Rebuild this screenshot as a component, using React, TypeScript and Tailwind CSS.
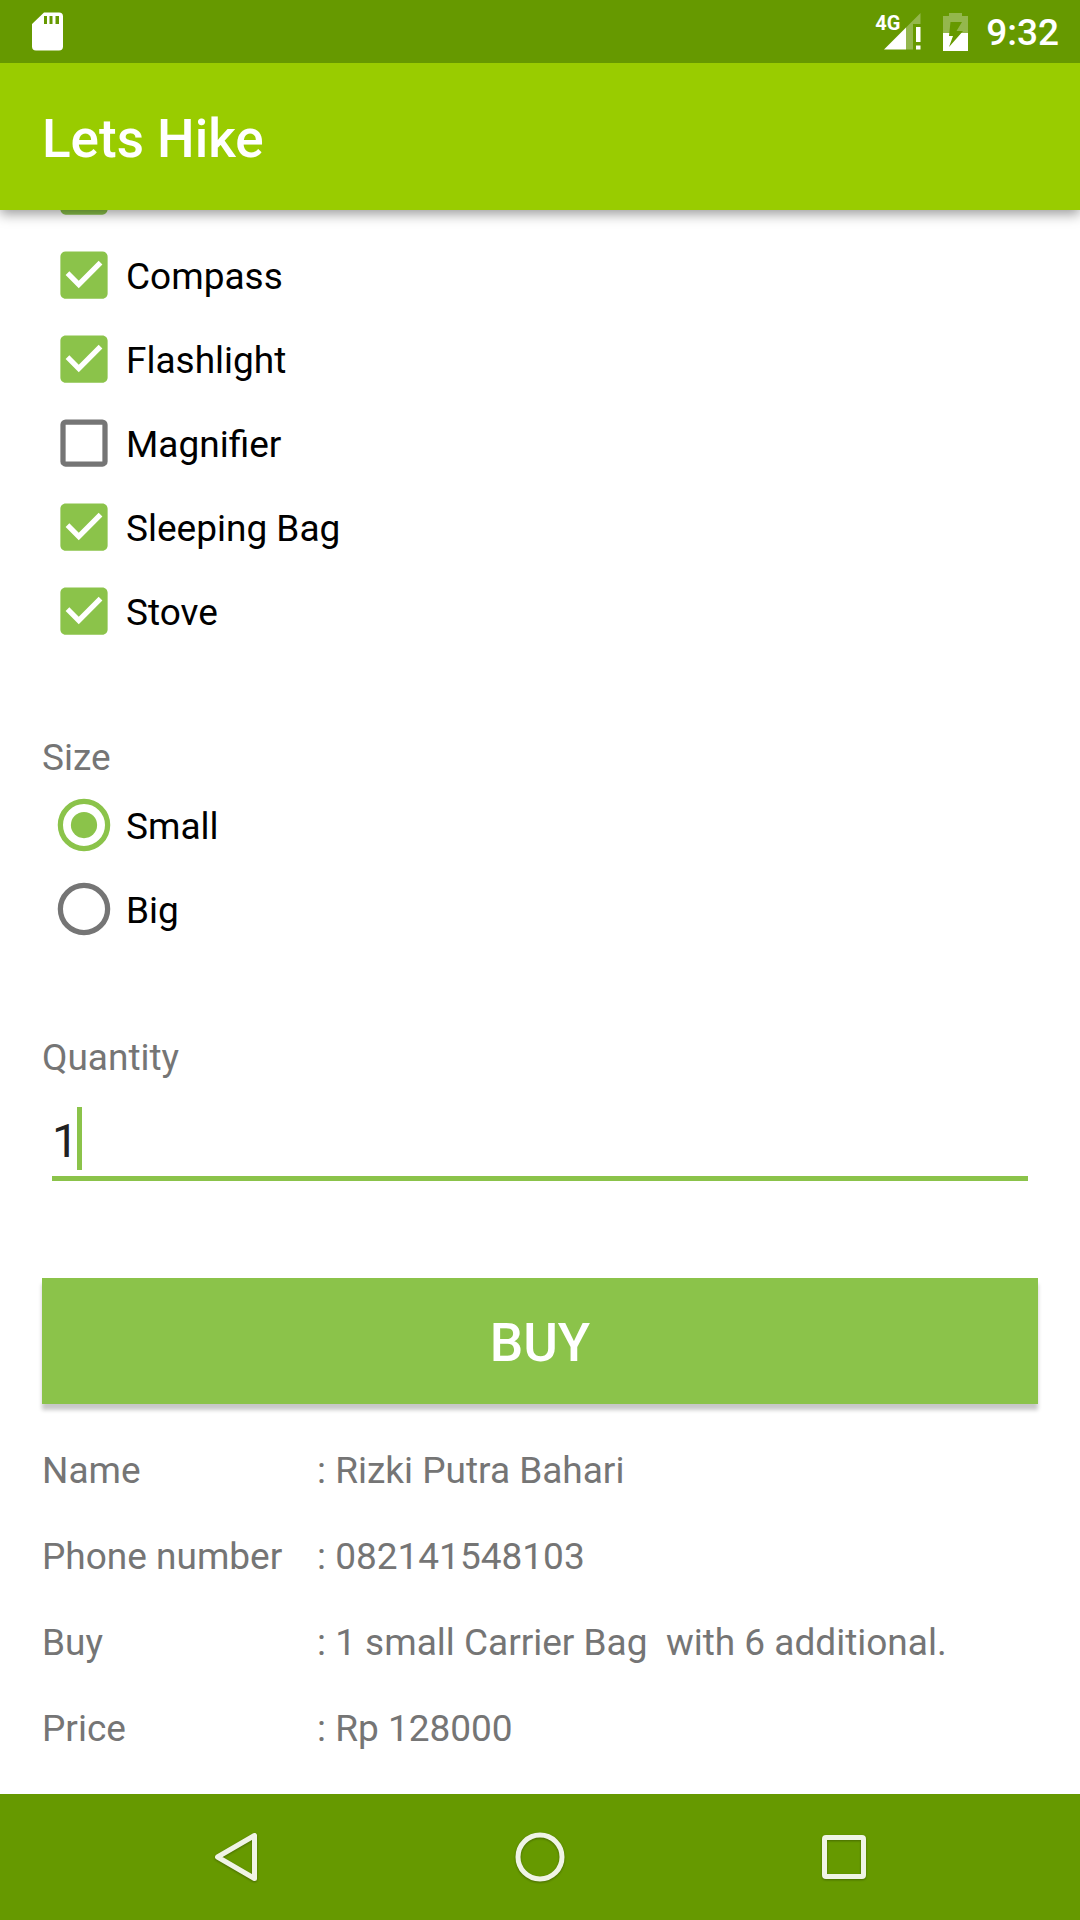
import { useState } from "react";
import type { ReactNode } from "react";

type Item = { name: string; checked: boolean; hidden?: boolean };

const ITEMS: Item[] = [
  { name: "Additional item", checked: true, hidden: true },
  { name: "Compass", checked: true },
  { name: "Flashlight", checked: true },
  { name: "Magnifier", checked: false },
  { name: "Sleeping Bag", checked: true },
  { name: "Stove", checked: true },
];

const SIZES = ["Small", "Big"];

const SUMMARY = [
  ["Name", ": Rizki Putra Bahari"],
  ["Phone number", ": 082141548103"],
  ["Buy", ": 1 small Carrier Bag  with 6 additional."],
  ["Price", ": Rp 128000"],
];

function SdCardIcon() {
  return (
    <svg width="31" height="39" viewBox="0 0 31 39" aria-hidden="true">
      <path
        fill="#fff"
        fillRule="evenodd"
        d="M12 0.5H27a4 4 0 0 1 4 4V34.500a4 4 0 0 1-4 4H4a4 4 0 0 1-4-4V12ZM12 4v8h3V4ZM17.500 4v8h3V4ZM23.500 4v8h3.500V4Z"
      />
    </svg>
  );
}

function SignalIcon() {
  return (
    <svg width="37" height="37" viewBox="0 0 37 37" aria-hidden="true">
      <path fill="#fff" fillOpacity="0.3" d="M22 14.500 36.500 0V11H29V36.500H22Z" />
      <path fill="#fff" d="M0 36.500 22 14.500V36.500ZM32 14h4.500V29H32ZM32 32.500h4.500v4H32Z" />
    </svg>
  );
}

function BatteryIcon() {
  return (
    <svg width="25" height="38" viewBox="0 0 25 38" fill="#fff" fillRule="evenodd" aria-hidden="true">
      <path
        fillOpacity="0.3"
        d="M6 0H19V3H25V20H0V3H6ZM7.500 9 6.300 20H18.300L20 18H13.500L19 9Z"
      />
      <path d="M0 20H25V38H0ZM6.300 20 6 23H10L6 34 18.300 20Z" />
    </svg>
  );
}

function Choice({
  label,
  control,
  children,
  hidden,
}: {
  label: string;
  control: ReactNode;
  children: ReactNode;
  hidden?: boolean;
}) {
  return (
    <label className="flex h-[84px] shrink-0 items-center self-start text-black">
      <span className="grid size-[84px] *:col-start-1 *:row-start-1">
        {control}
        <svg
          className="pointer-events-none size-[84px]"
          viewBox="0 0 32 32"
          aria-hidden="true"
        >
          {children}
        </svg>
      </span>
      {!hidden && <span className="pt-1">{label}</span>}
    </label>
  );
}

function NavButton({ label, children }: { label: string; children: ReactNode }) {
  return (
    <button type="button" aria-label={label} className="grid h-full w-[136px] place-items-center">
      <svg
        className="drop-shadow-[0_1px_1px_rgba(0,0,0,0.3)]"
        width="52"
        height="52"
        viewBox="0 0 52 52"
        fill="none"
        stroke="#f0f4e6"
        strokeWidth="5"
        strokeLinejoin="round"
        aria-hidden="true"
      >
        {children}
      </svg>
    </button>
  );
}

export default function App() {
  const [checks, setChecks] = useState(ITEMS.map((item) => item.checked));
  const [size, setSize] = useState("Small");
  const [quantity, setQuantity] = useState("1");

  return (
    <div className="flex h-screen flex-col bg-white font-[Roboto,sans-serif] text-[37px] leading-[50px] text-[#757575]">
      <div className="relative z-20 flex h-[63px] shrink-0 items-center justify-between bg-[#669900] pr-[21px] pl-8 text-white">
        <SdCardIcon />
        <div className="flex items-center">
          <div className="relative mr-[22px] pl-[9px]">
            <span className="absolute top-0 left-0 text-[20px] leading-[20px] font-bold">4G</span>
            <SignalIcon />
          </div>
          <BatteryIcon />
          <time className="ml-[18px] pt-[3px] font-medium">9:32</time>
        </div>
      </div>

      <header className="relative z-10 flex h-[147px] shrink-0 items-center bg-[#99cc00] pt-1 pl-[42px] shadow-[0_4px_12px_rgba(0,0,0,0.4)]">
        <h1 className="text-[53px] leading-[62px] font-medium text-white">Lets Hike</h1>
      </header>

      <main className="flex min-h-0 flex-1 flex-col justify-end overflow-hidden px-[42px] pb-[22px]">
        {ITEMS.map((item, i) => (
          <Choice
            key={item.name}
            label={item.name}
            hidden={item.hidden}
            control={
              <input
                type="checkbox"
                className="size-[84px] appearance-none outline-none"
                aria-label={item.name}
                checked={checks[i]}
                onChange={() => setChecks(checks.map((c, j) => (j === i ? !c : c)))}
              />
            }
          >
            {checks[i] ? (
              <path
                transform="translate(4 4)"
                fill="#8bc34a"
                d="M19 3H5C3.890 3 3 3.890 3 5v14c0 1.100.890 2 2 2h14c1.110 0 2-.900 2-2V5C21 3.890 20.110 3 19 3ZM10 17l-5-5 1.410-1.410L10 14.170l7.590-7.590L19 8l-9 9Z"
              />
            ) : (
              <rect x="8" y="8" width="16" height="16" rx="1" fill="none" stroke="#757575" strokeWidth="2" />
            )}
          </Choice>
        ))}

        <fieldset className="mt-[80px] flex shrink-0 flex-col">
          <legend>Size</legend>
          {SIZES.map((name) => {
            const on = size === name;
            return (
              <Choice
                key={name}
                label={name}
                control={
                  <input
                    type="radio"
                    name="size"
                    className="size-[84px] appearance-none outline-none"
                    checked={on}
                    onChange={() => setSize(name)}
                  />
                }
              >
                <circle cx="16" cy="16" r="9" fill="none" stroke={on ? "#8bc34a" : "#757575"} strokeWidth="2" />
                {on && <circle cx="16" cy="16" r="5" fill="#8bc34a" />}
              </Choice>
            );
          })}
        </fieldset>

        <label htmlFor="quantity" className="mt-[82px] shrink-0">
          Quantity
        </label>
        <div className="relative mx-[10px] mt-[24px] shrink-0">
          <input
            id="quantity"
            type="text"
            inputMode="numeric"
            value={quantity}
            onChange={(e) => setQuantity(e.target.value)}
            className="block h-[74px] w-full border-b-[5px] border-[#8bc34a] pb-[2px] text-[47px] leading-[66px] text-[#212121] caret-transparent outline-none"
          />
          <span className="absolute top-0 left-[25px] h-[63px] w-[5px] bg-[#8bc34a]" />
        </div>

        <button
          type="button"
          className="mt-[97px] h-[126px] shrink-0 bg-[#8bc34a] pt-1 text-[53px] leading-[62px] font-medium text-white shadow-[0_6px_4px_rgba(0,0,0,0.22)]"
        >
          BUY
        </button>

        <dl className="mt-[24px] shrink-0 leading-[86px]">
          {SUMMARY.map(([term, value]) => (
            <div key={term} className="flex">
              <dt className="w-[275px] shrink-0">{term}</dt>
              <dd className="whitespace-pre-wrap">{value}</dd>
            </div>
          ))}
        </dl>
      </main>

      <nav className="flex h-[126px] shrink-0 items-center justify-evenly bg-[#669900]">
        <NavButton label="Back">
          <path d="M44.500 4.500V47.500L7.500 26Z" />
        </NavButton>
        <NavButton label="Home">
          <circle cx="26" cy="26" r="22" />
        </NavButton>
        <NavButton label="Recent apps">
          <rect x="6.500" y="6.500" width="39" height="39" rx="1.500" />
        </NavButton>
      </nav>
    </div>
  );
}
